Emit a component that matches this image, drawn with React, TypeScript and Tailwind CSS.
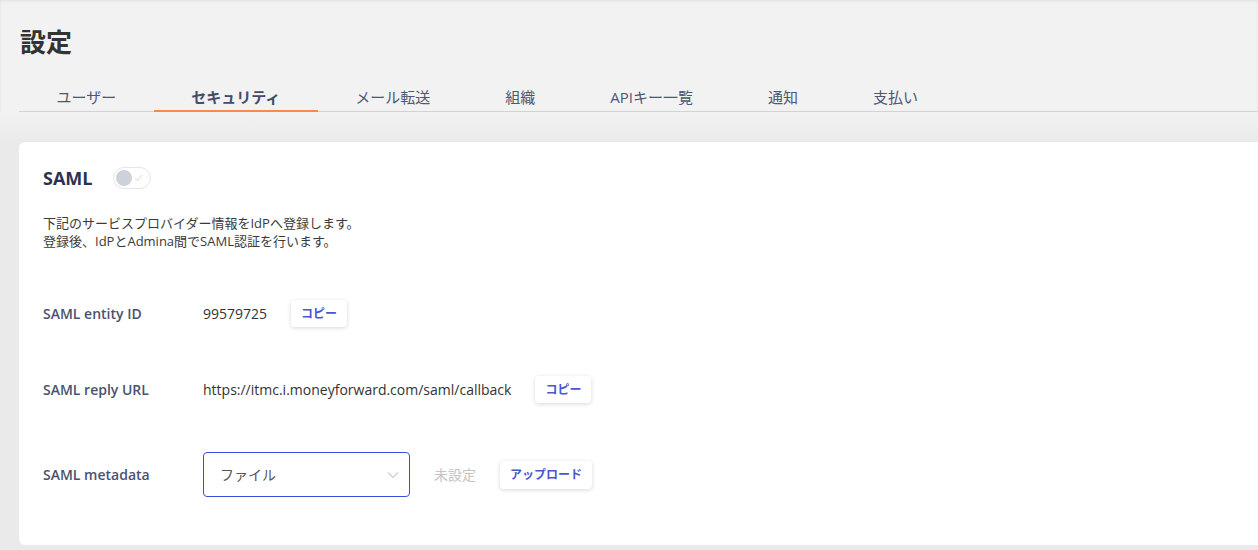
import React, {useState} from 'react'

const font = {fontFamily: '"Open Sans", "Noto Sans CJK JP", sans-serif'}

const tabs = ['ユーザー', 'セキュリティ', 'メール転送', '組織', 'APIキー一覧', '通知', '支払い']

const CopyButton = ({label}: {label: string}) => (
  <button className="h-[27px] rounded-[4px] bg-white px-[10px] text-[12px] leading-[27px] font-bold text-[#4a55d4] shadow-[0_1px_4px_rgba(0,0,0,0.16)]">
    {label}
  </button>
)

const Row = ({label, children}: {label: string; children: React.ReactNode}) => (
  <div className="flex items-center">
    <div className="w-[160px] shrink-0 text-[14px] font-semibold text-[#4a5270]">{label}</div>
    <div className="flex items-center gap-6">{children}</div>
  </div>
)

export default function App() {
  const [active, setActive] = useState(1)
  const [enabled, setEnabled] = useState(false)

  return (
    <div
      style={font}
      className="min-h-[550px] w-[1258px] overflow-hidden bg-[#f2f2f2] shadow-[inset_0_1px_3px_rgba(0,0,0,0.08)]"
    >
      <div className="pl-[19px]">
        <h1 className="pt-[26px] pl-px text-[26px] leading-[32px] font-bold text-[#333]">設定</h1>

        <div className="mt-[26px] flex border-b border-[#d2d2d2]">
          {tabs.map((t, i) => (
            <button
              key={t}
              onClick={() => setActive(i)}
              className={
                i === active
                  ? '-mb-px border-b-2 border-[#fb8a4a] px-[37.5px] pt-[3px] pb-[3px] text-[15px] leading-[20px] font-bold text-[#434c6b]'
                  : '-mb-px border-b-2 border-transparent px-[37.5px] pt-[3px] pb-[3px] text-[15px] leading-[20px] text-[#4d5673]'
              }
            >
              {t}
            </button>
          ))}
        </div>
      </div>

      <div className="bg-[linear-gradient(to_bottom,#f2f2f2,#eaeaeb_30px)] pt-[30px] pb-[5px] pl-[19px]">
        <div className="h-[403px] rounded-l-[6px] bg-white pt-[24px] pl-[24px]">
          <div className="flex items-center gap-[21px]">
            <h2 className="text-[18px] leading-[24px] font-bold text-[#2c3152]">SAML</h2>
            <button
              onClick={() => setEnabled(!enabled)}
              className="relative h-[22px] w-[38px] rounded-full border border-[#e6e6e6] bg-white"
            >
              <span className="absolute top-[2px] left-[2px] h-[16px] w-[16px] rounded-full bg-[#ccd1da]" />
              <svg
                className="absolute top-[6px] right-[7px]"
                width="9"
                height="8"
                viewBox="0 0 9 8"
                fill="none"
                stroke="#e8e8e8"
                strokeWidth="1.2"
              >
                <path d="M1 4l2.5 2.5L8 1" />
              </svg>
            </button>
          </div>

          <p className="mt-[24px] text-[13px] leading-[18px] text-[#3a3a3a]">
            下記のサービスプロバイダー情報をIdPへ登録します。
            <br />
            登録後、IdPとAdmina間でSAML認証を行います。
          </p>

          <div className="mt-[50px] flex flex-col gap-[49px]">
            <Row label="SAML entity ID">
              <span className="text-[14px] text-[#333]">99579725</span>
              <CopyButton label="コピー" />
            </Row>
            <Row label="SAML reply URL">
              <span className="text-[14px] text-[#333]">https://itmc.i.moneyforward.com/saml/callback</span>
              <CopyButton label="コピー" />
            </Row>
            <Row label="SAML metadata">
              <div className="flex h-[45px] w-[207px] items-center justify-between rounded-[4px] border border-[#3a4fd7] pr-[10px] pl-[16px]">
                <span className="text-[14px] text-[#555]">ファイル</span>
                <svg width="12" height="8" viewBox="0 0 12 8" fill="none" stroke="#cfcfcf" strokeWidth="1.2">
                  <path d="M1 1.5l5 5 5-5" />
                </svg>
              </div>
              <span className="text-[14px] text-[#c3c3c3]">未設定</span>
              <button className="h-[28px] rounded-[4px] bg-white px-[10px] text-[12px] leading-[28px] font-bold text-[#4a55d4] shadow-[0_1px_4px_rgba(0,0,0,0.16)]">
                アップロード
              </button>
            </Row>
          </div>
        </div>
      </div>
    </div>
  )
}
